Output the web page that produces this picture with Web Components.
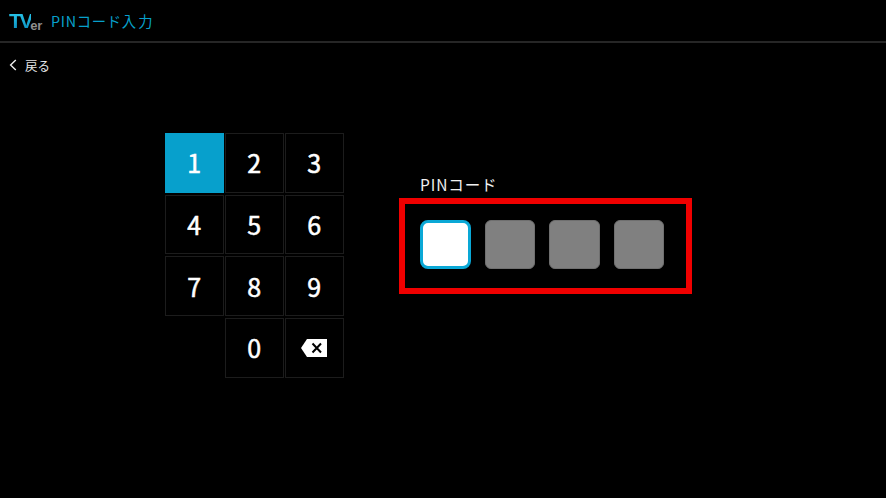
<!DOCTYPE html>
<html lang="ja"><head><meta charset="utf-8"><title>PINコード入力</title>
<style>
html,body{margin:0;padding:0;background:#000;}
body{width:886px;height:498px;overflow:hidden;font-family:"Noto Sans CJK JP","Noto Sans",sans-serif;color:#fff;}
</style></head><body>
<tv-app></tv-app>
<script>
function def(name, html){
  customElements.define(name, class extends HTMLElement{
    constructor(){super();this.attachShadow({mode:'open'}).innerHTML=html;}
  });
}
def('tv-header',`<style>
:host{display:flex;align-items:center;box-sizing:border-box;height:43px;border-bottom:2px solid #262626;padding:0 0 0 9px;}
.logo{display:flex;align-items:flex-end;width:42px;height:19px;font-family:"Liberation Sans",sans-serif;font-weight:700;line-height:1;}
.tv{font-size:21px;letter-spacing:-2.5px;line-height:19px;background:linear-gradient(180deg,#2ccbee,#0a8fbf);-webkit-background-clip:text;background-clip:text;color:transparent;}
.er{font-size:13px;font-weight:700;color:#8f8f8f;margin-left:-.5px;font-family:"Liberation Sans",sans-serif;letter-spacing:-.3px;position:relative;top:2px;}
h1{margin:0;font-weight:400;font-size:14.3px;letter-spacing:.7px;color:#07a0cc;line-height:20px;}
</style><div class="logo"><span class="tv">TV</span><span class="er">er</span></div><h1><slot></slot></h1>`);
def('tv-back',`<style>
:host{display:flex;align-items:center;height:20px;margin:12px 0 0 9px;font-size:12.5px;color:#e6e6e6;}
svg{width:8px;height:12px;margin-right:8px;}
</style><svg viewBox="0 0 8 12"><path d="M6.8 1 1.6 6l5.2 5" fill="none" stroke="#eee" stroke-width="1.4"/></svg><slot></slot>`);
def('tv-key',`<style>
:host{display:flex;align-items:center;justify-content:center;box-sizing:border-box;border:1px solid #1c1c1c;font-size:25px;font-weight:400;-webkit-text-stroke:.55px #fff;color:#fff;line-height:1;}
:host([active]){background:#07a0cc;border-color:#07a0cc;}
svg{display:block;}
</style><slot></slot>`);
def('tv-keypad',`<style>
:host{display:grid;grid-template-columns:repeat(3,58.5px);grid-template-rows:repeat(4,59.8px);column-gap:1.5px;row-gap:1.9px;}
</style><slot></slot>`);
def('tv-pin-box',`<style>
:host{display:block;width:50.7px;height:49.3px;box-sizing:border-box;border-radius:6px;background:#808080;border:1px solid #6f6f6f;}
:host([focused]){background:#fff;border:3px solid #0aa8d6;border-radius:8px;}
</style>`);
def('tv-pin',`<style>
:host{display:block;}
.label{margin:-1px 0 1px 21px;font-size:15.5px;letter-spacing:.9px;line-height:20px;color:#f0f0f0;height:23px;}
.frame{box-sizing:border-box;width:293px;height:96px;border:6px solid #f00000;padding:16px 0 0 15.3px;display:flex;gap:13.8px;align-items:flex-start;}
</style><div class="label">PINコード</div><div class="frame"><slot></slot></div>`);
def('tv-app',`<style>
:host{display:block;width:886px;height:498px;background:#000;}
main{display:flex;align-items:flex-start;padding:58px 0 0 165px;}
tv-pin{margin:42px 0 0 55.5px;}
.empty{visibility:hidden;}
.sp{letter-spacing:2.4px;}
</style>
<tv-header>PINコード<span class="sp">入力</span></tv-header>
<tv-back>戻る</tv-back>
<main>
<tv-keypad>
<tv-key active>1</tv-key><tv-key>2</tv-key><tv-key>3</tv-key>
<tv-key>4</tv-key><tv-key>5</tv-key><tv-key>6</tv-key>
<tv-key>7</tv-key><tv-key>8</tv-key><tv-key>9</tv-key>
<span class="empty"></span><tv-key>0</tv-key>
<tv-key aria-label="削除"><svg width="26" height="18" viewBox="0 0 26 18"><path d="M6 0H26V18H6L0 9Z" fill="#fff"/><path d="M11.5 4.5 20 13.5M20 4.5 11.5 13.5" stroke="#000" stroke-width="2" fill="none"/></svg></tv-key>
</tv-keypad>
<tv-pin><tv-pin-box focused></tv-pin-box><tv-pin-box></tv-pin-box><tv-pin-box></tv-pin-box><tv-pin-box></tv-pin-box></tv-pin>
</main>`);
</script>
</body></html>
